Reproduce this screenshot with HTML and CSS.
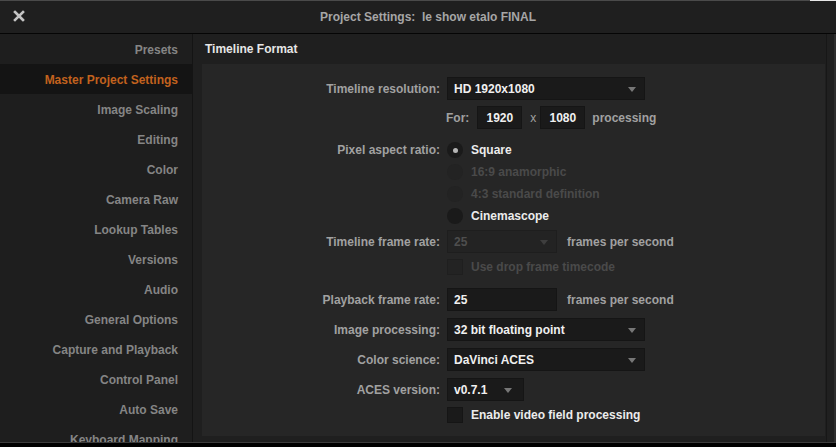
FILE: index.html
```html
<!DOCTYPE html>
<html>
<head>
<meta charset="utf-8">
<link rel="stylesheet" href="styles.css">
</head>
<body>
<div class="window">
  <div class="titlebar">
    <span class="close">
      <svg width="12" height="12" viewBox="0 0 12 12"><path d="M2 2 L10 10 M10 2 L2 10" stroke="#c4c4c4" stroke-width="2.6" stroke-linecap="square"/></svg>
    </span>
    <span class="title">Project Settings:&nbsp; le show etalo FINAL</span>
  </div>
  <div class="body">
    <nav class="sidebar">
      <div class="nav-item">Presets</div>
      <div class="nav-item active">Master Project Settings</div>
      <div class="nav-item">Image Scaling</div>
      <div class="nav-item">Editing</div>
      <div class="nav-item">Color</div>
      <div class="nav-item">Camera Raw</div>
      <div class="nav-item">Lookup Tables</div>
      <div class="nav-item">Versions</div>
      <div class="nav-item">Audio</div>
      <div class="nav-item">General Options</div>
      <div class="nav-item">Capture and Playback</div>
      <div class="nav-item">Control Panel</div>
      <div class="nav-item">Auto Save</div>
      <div class="nav-item">Keyboard Mapping</div>
    </nav>
    <main class="main">
      <h2 class="section-title">Timeline Format</h2>
      <div class="panel">
        <div class="row r-res">
          <label class="lbl">Timeline resolution:</label>
          <div class="ctl">
            <div class="select w-wide"><span>HD 1920x1080</span><i class="arrow"></i></div>
          </div>
        </div>
        <div class="row r-for">
          <label class="lbl"></label>
          <div class="ctl">
            <span class="lbl-inline for">For:</span>
            <div class="input num">1920</div>
            <span class="lbl-inline times">x</span>
            <div class="input num">1080</div>
            <span class="lbl-inline after">processing</span>
          </div>
        </div>
        <div class="row r-radio first">
          <label class="lbl">Pixel aspect ratio:</label>
          <div class="ctl"><span class="radio checked"></span><span class="opt">Square</span></div>
        </div>
        <div class="row r-radio">
          <label class="lbl"></label>
          <div class="ctl"><span class="radio dim"></span><span class="opt dim">16:9 anamorphic</span></div>
        </div>
        <div class="row r-radio">
          <label class="lbl"></label>
          <div class="ctl"><span class="radio dim"></span><span class="opt dim">4:3 standard definition</span></div>
        </div>
        <div class="row r-radio">
          <label class="lbl"></label>
          <div class="ctl"><span class="radio"></span><span class="opt">Cinemascope</span></div>
        </div>
        <div class="row r-tfr">
          <label class="lbl">Timeline frame rate:</label>
          <div class="ctl">
            <div class="select w-mid disabled"><span>25</span><i class="arrow"></i></div>
            <span class="lbl-inline unit">frames per second</span>
          </div>
        </div>
        <div class="row r-check">
          <label class="lbl"></label>
          <div class="ctl"><span class="checkbox dim"></span><span class="opt dim">Use drop frame timecode</span></div>
        </div>
        <div class="row r-pfr">
          <label class="lbl">Playback frame rate:</label>
          <div class="ctl">
            <div class="input w-mid">25</div>
            <span class="lbl-inline unit">frames per second</span>
          </div>
        </div>
        <div class="row r-sel">
          <label class="lbl">Image processing:</label>
          <div class="ctl"><div class="select w-wide"><span>32 bit floating point</span><i class="arrow"></i></div></div>
        </div>
        <div class="row r-sel">
          <label class="lbl">Color science:</label>
          <div class="ctl"><div class="select w-wide"><span>DaVinci ACES</span><i class="arrow"></i></div></div>
        </div>
        <div class="row r-sel">
          <label class="lbl">ACES version:</label>
          <div class="ctl"><div class="select w-small"><span>v0.7.1</span><i class="arrow"></i></div></div>
        </div>
        <div class="row r-check last">
          <label class="lbl"></label>
          <div class="ctl"><span class="checkbox"></span><span class="opt">Enable video field processing</span></div>
        </div>
      </div>
    </main>
    <div class="edge"></div>
  </div>
</div>
</body>
</html>
```
FILE: styles.css
```css
html, body {
  margin: 0;
  padding: 0;
  background: #000;
}
body {
  width: 836px;
  height: 447px;
  overflow: hidden;
  font-family: "Liberation Sans", Arial, sans-serif;
  font-size: 12px;
  font-weight: bold;
}
.window {
  width: 836px;
  height: 442px;
  display: flex;
  flex-direction: column;
  background: #1e1e1e;
  border-bottom: 1px solid #3c3c3c;
  position: relative;
}
.window::after {
  content: "";
  position: absolute;
  right: 0;
  top: 0;
  width: 26px;
  height: 1px;
  background: #e8e8e8;
}
.titlebar {
  height: 32px;
  flex: none;
  border-top: 1px solid #4a4a4a;
  border-bottom: 1px solid #050505;
  background: #1f1f1f;
  display: flex;
  align-items: center;
  justify-content: center;
  position: relative;
}
.close {
  position: absolute;
  left: 13px;
  top: 9px;
  width: 12px;
  height: 12px;
  display: flex;
}
.title {
  color: #a6a6a6;
  font-size: 12px;
  margin-left: 20px;
}
.body {
  flex: 1;
  display: flex;
  min-height: 0;
  overflow: hidden;
}
.sidebar {
  width: 192px;
  flex: none;
  background: #1e1e1e;
  border-right: 1px solid #141414;
  display: flex;
  flex-direction: column;
  overflow: hidden;
}
.nav-item {
  height: 30px;
  flex: none;
  line-height: 32px;
  text-align: right;
  padding-right: 14px;
  color: #858585;
  white-space: nowrap;
}
.nav-item.active {
  background: #141414;
  color: #c2621e;
}
.main {
  flex: 1;
  background: #1f1f1f;
  display: flex;
  flex-direction: column;
  padding-left: 9px;
  min-width: 0;
}
.section-title {
  margin: 0;
  height: 30px;
  line-height: 30px;
  font-size: 12px;
  color: #e6e6e6;
  padding-left: 3px;
}
.panel {
  width: 623px;
  height: 372px;
  background: #262626;
  display: flex;
  flex-direction: column;
  padding-top: 13px;
  box-sizing: border-box;
}
.edge {
  width: 10px;
  flex: none;
  background: #202020;
  border-left: 1px solid #171717;
  border-right: 2px solid #2e2e2e;
  box-sizing: border-box;
}
.row {
  display: flex;
  align-items: center;
  height: 23px;
}
.lbl {
  width: 238px;
  flex: none;
  text-align: right;
  color: #a1a1a1;
  white-space: nowrap;
}
.ctl {
  margin-left: 7px;
  display: flex;
  align-items: center;
  height: 100%;
}
.r-for { margin-top: 6px; }
.r-radio { height: 22px; }
.r-radio.first { margin-top: 10px; }
.r-tfr { margin-top: 3px; }
.r-check { height: 22px; margin-top: 3px; }
.r-pfr { margin-top: 10px; }
.r-sel { margin-top: 7px; }
.r-check.last { margin-top: 3px; }

.select, .input {
  height: 23px;
  box-sizing: border-box;
  background: #1a1a1a;
  border: 1px solid #151515;
  color: #f0f0f0;
  display: flex;
  align-items: center;
  padding-left: 6px;
  position: relative;
}
.w-wide { width: 198px; }
.w-mid { width: 110px; }
.w-small { width: 77px; }
.select .arrow {
  position: absolute;
  right: 8px;
  top: 9px;
  width: 0;
  height: 0;
  border-left: 4px solid transparent;
  border-right: 4px solid transparent;
  border-top: 5px solid #777;
}
.w-small .arrow { right: 11px; }
.select.disabled {
  background: #232323;
  border-color: #1e1e1e;
  color: #4e4e4e;
}
.select.disabled .arrow { border-top-color: #3e3e3e; }
.input.num {
  width: 45px;
  justify-content: center;
  padding-left: 0;
}
.lbl-inline { color: #a1a1a1; }
.for { margin-left: -1px; margin-right: 8px; }
.times { margin: 0 4px 0 8px; font-weight: normal; }
.after { margin-left: 7px; }
.unit { margin-left: 10px; }
.radio {
  width: 16px;
  height: 16px;
  border-radius: 50%;
  background: #1a1a1a;
  display: flex;
  align-items: center;
  justify-content: center;
  flex: none;
}
.radio.checked::after {
  content: "";
  width: 5px;
  height: 5px;
  border-radius: 50%;
  background: #b5b5b5;
}
.radio.dim { background: #232323; }
.opt {
  margin-left: 8px;
  color: #ececec;
  white-space: nowrap;
}
.opt.dim { color: #4a4a4a; }
.checkbox {
  width: 16px;
  height: 16px;
  background: #1a1a1a;
  border: 1px solid #151515;
  box-sizing: border-box;
  flex: none;
}
.checkbox.dim { background: #232323; border-color: #1f1f1f; }
```
